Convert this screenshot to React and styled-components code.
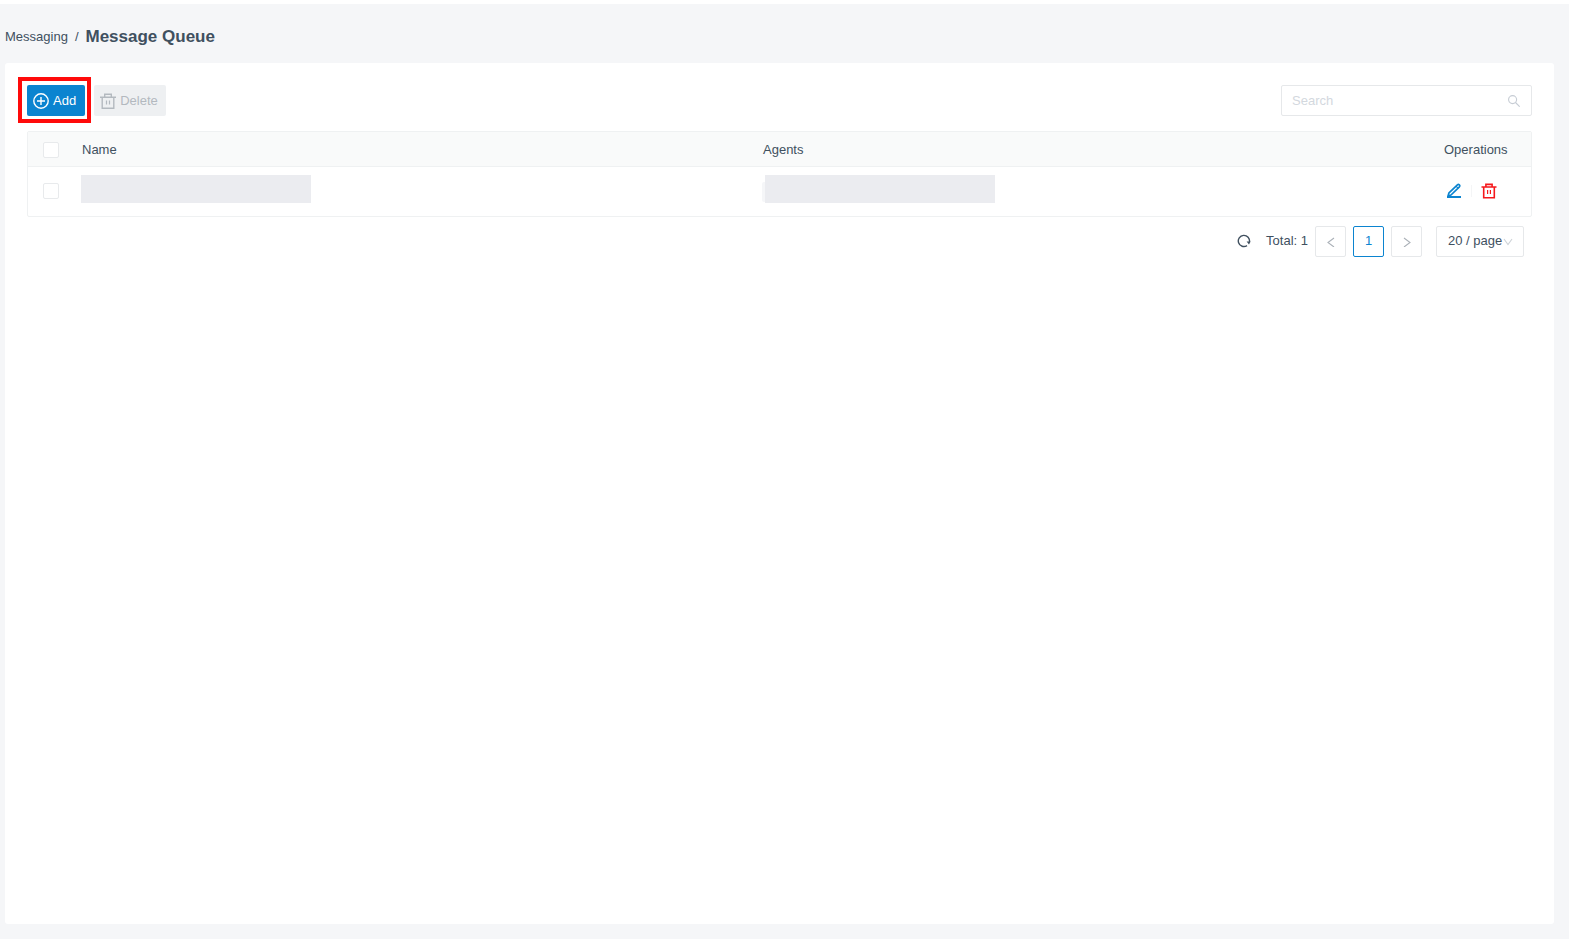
import React from "react";
import styled, { createGlobalStyle } from "styled-components";

const GlobalStyle = createGlobalStyle`
  *, *::before, *::after { box-sizing: border-box; }
  body {
    margin: 0;
    background: #fff;
    color: #40505f;
    font: 13px/20px "Liberation Sans", Arial, sans-serif;
  }
  button, input, select { font: inherit; color: inherit; margin: 0; }
  svg { display: block; flex: none; }
`;

const Page = styled.div`
  min-height: 100vh;
  display: flex;
  flex-direction: column;
  padding: 0 15px 15px 5px;
  border: solid #fff;
  border-width: 4px 1px 1px 0;
  background: #f5f6f8;
`;

const Breadcrumb = styled.nav`
  display: flex;
  align-items: center;
  gap: 7px;
  height: 59px;
  padding-top: 6px;
`;

const CrumbLink = styled.a`
  color: inherit;
  text-decoration: none;
`;

const Title = styled.h1`
  margin: 0;
  font-size: 17px;
  font-weight: 700;
`;

const Card = styled.main`
  flex: 1;
  padding: 22px;
  border-radius: 3px;
  background: #fff;
`;

const Toolbar = styled.div`
  display: flex;
  align-items: center;
  gap: 9px;
  margin-bottom: 15px;
`;

const Highlight = styled.div`
  position: relative;
  &::after {
    content: "";
    position: absolute;
    inset: -8px -6px -7px -9px;
    border: 4px solid #ff0a0a;
    pointer-events: none;
  }
`;

const Button = styled.button`
  display: flex;
  align-items: center;
  gap: 4px;
  height: 31px;
  padding: 0 ${(p) => (p.$primary ? "9px" : "8px")} 0 6px;
  border: 0;
  border-radius: 2px;
  background: ${(p) => (p.$primary ? "#0b84d0" : "#eef0f2")};
  color: ${(p) => (p.$primary ? "#fff" : "#b3b9bf")};
`;

const SearchBox = styled.label`
  display: flex;
  align-items: center;
  width: 251px;
  height: 31px;
  margin-left: auto;
  padding: 0 11px 0 10px;
  border: 1px solid #e6e8ea;
  border-radius: 2px;
  color: #c6ccd4;
`;

const SearchInput = styled.input`
  flex: 1;
  min-width: 0;
  padding: 0;
  border: 0;
  outline: 0;
  background: none;
  color: #40505f;
  &::placeholder { color: #d3d8de; opacity: 1; }
`;

const Table = styled.table`
  width: 100%;
  table-layout: fixed;
  border: 1px solid #eff1f2;
  border-radius: 2px;
  border-collapse: separate;
  border-spacing: 0;
`;

const HeadCell = styled.th`
  width: ${(p) => p.$width || "auto"};
  height: 35px;
  padding: 1px 7px 0;
  border-bottom: 1px solid #eff1f2;
  background: #f9fafa;
  font-weight: 400;
  text-align: left;
`;

const Cell = styled.td`
  height: 49px;
  padding: ${(p) => (p.$bar ? "8px 6px" : "0 7px 2px")};
  vertical-align: ${(p) => (p.$bar ? "top" : "middle")};
`;

const Checkbox = styled.input`
  appearance: none;
  display: block;
  width: 16px;
  height: 16px;
  margin: 0 0 0 8px;
  border: 1px solid #e8eaec;
  border-radius: 2px;
  background: #fff;
  &:checked { background: #0b84d0; }
`;

const Redacted = styled.div`
  width: 230px;
  max-width: 100%;
  height: 28px;
  background: #ebecf0;
`;

const AgentTag = styled.div`
  display: flex;
  align-items: center;
  &::before {
    content: "";
    width: 3px;
    height: 20px;
    margin-top: 6px;
    border-radius: 2px 0 0 2px;
    background: #f5f6f8;
  }
`;

const Actions = styled.div`
  display: flex;
  align-items: center;
  gap: 9px;
  padding-left: 2px;
`;

const IconButton = styled.button`
  display: flex;
  padding: 0;
  border: 0;
  background: none;
  color: ${(p) => p.$color || "inherit"};
`;

const Divider = styled.span`
  width: 1px;
  height: 12px;
  background: #f4f5f6;
`;

const Pagination = styled.nav`
  display: flex;
  justify-content: flex-end;
  align-items: center;
  gap: 7px;
  padding: 9px 8px 0 0;
`;

const Status = styled.div`
  display: flex;
  align-items: center;
  gap: 15px;
  margin-bottom: 2px;
`;

const PageButton = styled.button`
  display: flex;
  align-items: center;
  justify-content: center;
  width: 31px;
  height: 31px;
  padding: ${(p) => (p.$active ? "0 0 2px" : "0")};
  border: 1px solid ${(p) => (p.$active ? "#0b84d0" : "#e6e8ea")};
  border-radius: 2px;
  background: #fff;
  color: ${(p) => (p.$active ? "#0b84d0" : "#abb1b8")};
`;

const SizePicker = styled.label`
  display: grid;
  align-items: center;
  width: 88px;
  height: 31px;
  margin-left: 7px;
  & > * { grid-area: 1 / 1; }
  & > svg {
    justify-self: end;
    margin-right: 11px;
    color: #cdd2d7;
    pointer-events: none;
  }
`;

const SizeSelect = styled.select`
  appearance: none;
  width: 100%;
  height: 31px;
  padding: 0 0 2px 11px;
  border: 1px solid #e6e8ea;
  border-radius: 2px;
  background: #fff;
`;

function Svg({ size = 16, weight = 1, children }) {
  return (
    <svg
      width={size}
      height={size}
      viewBox={`0 0 ${size} ${size}`}
      fill="none"
      stroke="currentColor"
      strokeWidth={weight}
      aria-hidden="true"
    >
      {children}
    </svg>
  );
}

const PlusCircleIcon = () => (
  <Svg weight={1.4}>
    <circle cx="8" cy="8" r="7.2" />
    <path d="M8 4v8M4 8h8" />
  </Svg>
);

const TrashIcon = () => (
  <Svg weight={1.4}>
    <path d="M0 4.3h16M4.7 4V1.2h6.6V4M2.2 4v11.2h11.6V4" />
    <path d="M6.5 7.5v4M9.5 7.5v4" strokeWidth="1.2" />
  </Svg>
);

const RowTrashIcon = () => (
  <Svg weight={1.6}>
    <path d="M.5 4h15M4.9 4V1.4h6.2V4M2.7 4v10.7h10.6V4" />
    <path d="M6.6 7v4M9.4 7v4" strokeWidth="1.2" />
  </Svg>
);

const PencilIcon = () => (
  <Svg weight={1.7}>
    <path d="M2 13l1-3.2 8.4-8q1-.8 1.9.1t.1 1.9L5 12z" strokeLinejoin="round" />
    <path d="M10 3.2l2.2 2.2" strokeWidth="1.2" />
    <path d="M1 14h14" strokeWidth="2" />
  </Svg>
);

const SearchIcon = () => (
  <Svg size={12} weight={1.1}>
    <circle cx="4.6" cy="4.6" r="4" />
    <path d="M7.5 7.5l4.2 4.2" />
  </Svg>
);

const RefreshIcon = () => (
  <Svg size={14} weight={1.4}>
    <path d="M10 11.6A5.6 5.6 0 1 1 12.4 8" />
    <path d="M9.6 7.4h4l-1.6 3z" fill="currentColor" stroke="none" />
  </Svg>
);

const ChevronIcon = ({ d }) => (
  <Svg size={10} weight={1.1}>
    <path d={d} />
  </Svg>
);

export default function App() {
  return (
    <>
      <GlobalStyle />
      <Page>
        <Breadcrumb aria-label="Breadcrumb">
          <CrumbLink href="#messaging">Messaging</CrumbLink>
          <span>/</span>
          <Title>Message Queue</Title>
        </Breadcrumb>
        <Card>
          <Toolbar>
            <Highlight>
              <Button type="button" $primary>
                <PlusCircleIcon />
                Add
              </Button>
            </Highlight>
            <Button type="button" disabled>
              <TrashIcon />
              Delete
            </Button>
            <SearchBox>
              <SearchInput type="text" placeholder="Search" aria-label="Search" />
              <SearchIcon />
            </SearchBox>
          </Toolbar>
          <Table>
            <thead>
              <tr>
                <HeadCell $width="47px">
                  <Checkbox type="checkbox" aria-label="Select all" />
                </HeadCell>
                <HeadCell>Name</HeadCell>
                <HeadCell>Agents</HeadCell>
                <HeadCell $width="94px">Operations</HeadCell>
              </tr>
            </thead>
            <tbody>
              <tr>
                <Cell>
                  <Checkbox type="checkbox" aria-label="Select queue" />
                </Cell>
                <Cell $bar>
                  <Redacted />
                </Cell>
                <Cell $bar>
                  <AgentTag>
                    <Redacted />
                  </AgentTag>
                </Cell>
                <Cell>
                  <Actions>
                    <IconButton type="button" aria-label="Edit" $color="#0b84d0">
                      <PencilIcon />
                    </IconButton>
                    <Divider />
                    <IconButton type="button" aria-label="Delete queue" $color="#f5191c">
                      <RowTrashIcon />
                    </IconButton>
                  </Actions>
                </Cell>
              </tr>
            </tbody>
          </Table>
          <Pagination aria-label="Pagination">
            <Status>
              <IconButton type="button" aria-label="Refresh">
                <RefreshIcon />
              </IconButton>
              <span>Total: 1</span>
            </Status>
            <PageButton type="button" aria-label="Previous page">
              <ChevronIcon d="M8 1L2 5.5L8 10" />
            </PageButton>
            <PageButton type="button" $active>1</PageButton>
            <PageButton type="button" aria-label="Next page">
              <ChevronIcon d="M2 1l6 4.5L2 10" />
            </PageButton>
            <SizePicker>
              <SizeSelect aria-label="Rows per page" defaultValue="20">
                <option value="20">20 / page</option>
                <option value="50">50 / page</option>
              </SizeSelect>
              <ChevronIcon d="M1 2l4 5.5L9 2" />
            </SizePicker>
          </Pagination>
        </Card>
      </Page>
    </>
  );
}
